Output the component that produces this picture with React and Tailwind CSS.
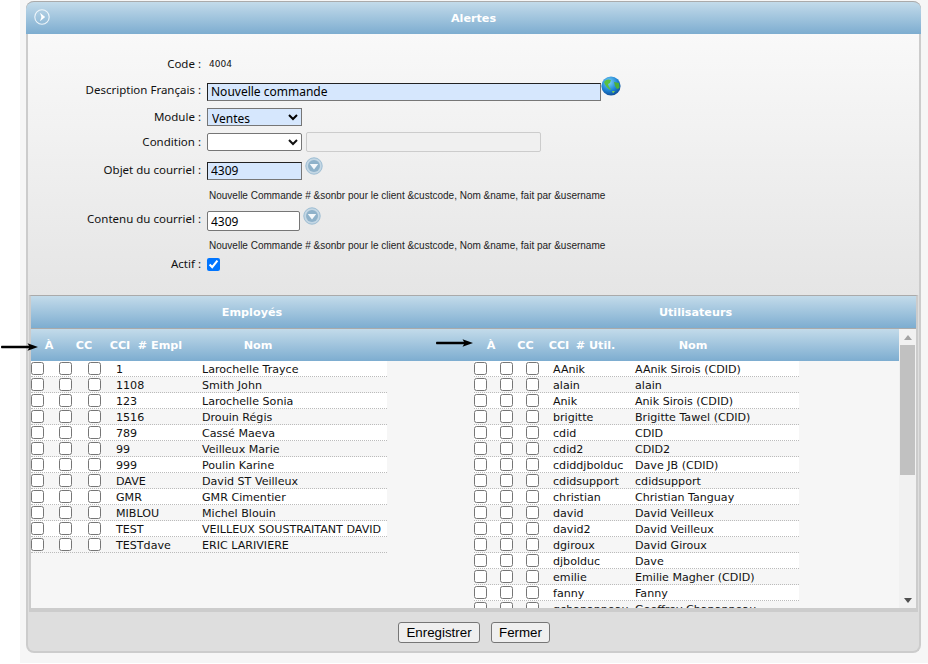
const employes = [
  ["1", "Larochelle Trayce"],
  ["1108", "Smith John"],
  ["123", "Larochelle Sonia"],
  ["1516", "Drouin Régis"],
  ["789", "Cassé Maeva"],
  ["99", "Veilleux Marie"],
  ["999", "Poulin Karine"],
  ["DAVE", "David ST Veilleux"],
  ["GMR", "GMR Cimentier"],
  ["MIBLOU", "Michel Blouin"],
  ["TEST", "VEILLEUX SOUSTRAITANT DAVID"],
  ["TESTdave", "ERIC LARIVIERE"],
];

const utilisateurs = [
  ["AAnik", "AAnik Sirois (CDID)"],
  ["alain", "alain"],
  ["Anik", "Anik Sirois (CDID)"],
  ["brigitte", "Brigitte Tawel (CDID)"],
  ["cdid", "CDID"],
  ["cdid2", "CDID2"],
  ["cdiddjbolduc", "Dave JB (CDID)"],
  ["cdidsupport", "cdidsupport"],
  ["christian", "Christian Tanguay"],
  ["david", "David Veilleux"],
  ["david2", "David Veilleux"],
  ["dgiroux", "David Giroux"],
  ["djbolduc", "Dave"],
  ["emilie", "Emilie Magher (CDID)"],
  ["fanny", "Fanny"],
  ["gchapanneau", "Geoffroy Chapanneau"],
];

const band = "bg-gradient-to-b from-[#c3dbea] to-[#7dadd0]";
const head = "text-center font-['DejaVu_Sans',sans-serif] text-[11.2px] font-bold text-white whitespace-nowrap";
const field = "font-['Noto_Sans',sans-serif] text-[12px] text-black";

const Box = () => <input type="checkbox" className="m-0 h-[13px] w-[13px] shrink-0" />;

const PickIcon = () => (
  <svg width="18" height="18" viewBox="0 0 18 18" className="shrink-0">
    <circle cx="9" cy="9" r="8.2" fill="#c4d7e4" stroke="#9dbdd3" />
    <circle cx="9" cy="9" r="6" fill="#8fb2ca" />
    <path d="M4.8 7 H13.2 L9 12.6 Z" fill="#f4f8fb" />
  </svg>
);

const Globe = () => (
  <svg width="20" height="20" viewBox="0 0 20 20" className="mt-[-12px] shrink-0">
    <defs>
      <radialGradient id="sea" cx="40%" cy="30%" r="78%">
        <stop offset="0%" stopColor="#7fd4f6" />
        <stop offset="55%" stopColor="#1f86d6" />
        <stop offset="100%" stopColor="#0c3f8c" />
      </radialGradient>
    </defs>
    <circle cx="10" cy="10" r="9.6" fill="url(#sea)" />
    <path d="M3 6 C5 3 8 3 10 4 L9 7 L7 8 L8 11 L10 13 L9 14 C6 12 4 9 3 6 Z" fill="#5cc040" />
    <path d="M13 6 L18 7 L18.5 12 L16 13 L14 10 Z" fill="#4cb038" />
    <path d="M11 15 L14 15 L12 17.5 Z" fill="#7ccc50" />
  </svg>
);

const Arrow = ({ className }) => (
  <svg width="37" height="8" viewBox="0 0 37 8" className={`absolute ${className}`}>
    <path d="M1 2.7 H28 L26.5 0.3 L37 4 L26.5 7.7 L28 5.3 H1 C0.2 5.3 0 4.6 0 4 C0 3.4 0.2 2.7 1 2.7 Z" fill="#000" />
  </svg>
);

const Row = ({ label, labelClass = "", className = "", children }) => (
  <div className={`flex items-center ${className}`}>
    <span className={`w-[173px] shrink-0 text-right ${labelClass}`}>{label} :</span>
    <div className="ml-[6px] flex items-center">{children}</div>
  </div>
);

const Hint = ({ className = "" }) => (
  <p className={`ml-[181px] font-['Liberation_Sans',sans-serif] text-[10px] leading-3 text-[#222] ${className}`}>
    Nouvelle Commande # &sonbr pour le client &custcode, Nom &name, fait par &username
  </p>
);

const Table = ({ rows, width, colA, colB }) => (
  <div className={width}>
    {rows.map(([id, nom], i) => (
      <div
        key={id}
        className={`flex h-4 items-center border-b border-dotted border-[#bbb] font-['DejaVu_Sans',sans-serif] text-[11.1px] text-[#111] ${
          i % 2 === 0 ? "bg-white" : "bg-[#f6f6f6]"
        }`}
      >
        <div className={`flex shrink-0 ${colA}`}>
          <Box />
          <Box />
          <Box />
        </div>
        <span className={`mt-[4px] shrink-0 whitespace-nowrap ${colB}`}>{id}</span>
        <span className="mt-[4px] whitespace-nowrap">{nom}</span>
      </div>
    ))}
  </div>
);

export default function App() {
  return (
    <div className="relative ml-5 h-[663px] bg-[#f6f6f6] pt-px pl-[6px] pr-[7px] font-['Noto_Sans',sans-serif] text-[11.5px] text-[#111]">
      <div className="flex h-[652px] flex-col rounded-lg border-x-2 border-b-2 border-[#ccc] bg-[#dedede]">
        {/* titre */}
        <div className={`relative -mx-0.5 flex h-[33px] shrink-0 items-center justify-center rounded-t-lg border-t border-[#aaa] pt-[2px] ${band} ${head}`}>
          <svg width="16" height="16" viewBox="0 0 16 16" className="absolute left-[8px] top-[7px]">
            <circle cx="8" cy="8" r="7.2" fill="none" stroke="#eef5fa" strokeWidth="1.1" />
            <path d="M6 3.8 L11.2 8 L6 12.2 L7.4 8 Z" fill="#fff" />
          </svg>
          Alertes
        </div>

        {/* formulaire */}
        <div className="h-[261px] shrink-0 bg-gradient-to-b from-[#f9f9f9] to-[#e5e5e5] pt-[22px]">
          <Row label="Code" labelClass="mt-[-2px]" className="h-[18px]">
            <span className="ml-[2px] font-['DejaVu_Sans',sans-serif] text-[9px]">4004</span>
          </Row>
          <Row label="Description Français" labelClass="mt-[-4px]" className="mt-[9px] h-[18px]">
            <input
              defaultValue="Nouvelle commande"
              className={`h-[18px] w-[394px] border border-t-[#222] border-l-[#222] border-r-[#777] border-b-[#777] bg-[#d6e7fd] px-[3px] ${field}`}
            />
            <Globe />
          </Row>
          <Row label="Module" className="mt-[6px] h-[19px]">
            <select className={`h-[18px] w-[95px] border border-[#767676] bg-[#d6e7fd] ${field}`}>
              <option>Ventes</option>
            </select>
          </Row>
          <Row label="Condition" className="mt-[6px] h-[19px]">
            <select className="h-[18px] w-[95px] rounded-[2px] border border-[#767676] bg-white" />
            <input
              disabled
              className="ml-[4px] h-[20px] w-[235px] rounded-[2px] border border-[#ccc] bg-[#f0f0f0]"
            />
          </Row>
          <Row label="Objet du courriel" labelClass="mt-[-2px]" className="mt-[11px] h-[18px]">
            <input
              defaultValue="4309"
              className={`h-[18px] w-[95px] border border-t-[#222] border-l-[#222] border-r-[#777] border-b-[#777] bg-[#d6e7fd] px-[3px] ${field}`}
            />
            <span className="ml-[3px] mt-[-10px]">
              <PickIcon />
            </span>
          </Row>
          <Hint className="mt-[10px]" />
          <Row label="Contenu du courriel" labelClass="mt-[-4px]" className="mt-[9px] h-[20px]">
            <input
              defaultValue="4309"
              className={`h-[20px] w-[93px] rounded-[2px] border border-[#767676] bg-white px-[3px] ${field}`}
            />
            <span className="ml-[3px] mt-[-10px]">
              <PickIcon />
            </span>
          </Row>
          <Hint className="mt-[9px]" />
          <Row label="Actif" className="mt-[5px] h-[14px]">
            <input type="checkbox" defaultChecked className="m-0 h-[13px] w-[13px]" />
          </Row>
        </div>

        {/* listes */}
        <div className="mx-px flex h-[317px] shrink-0 flex-col border-x-2 border-b-4 border-[#ccc] border-t-[#aaa] bg-[#f6f6f6] [border-top-width:1px]">
          <div className={`grid h-[32px] shrink-0 grid-cols-[442px_1fr] items-center pt-[2px] ${band} ${head}`}>
            <span>Employés</span>
            <span className="pl-[2px]">Utilisateurs</span>
          </div>
          <div className="flex min-h-0 flex-1 border-t border-[#aaa]">
            <div className="flex min-w-0 flex-1 flex-col">
              <div className={`flex h-[32px] shrink-0 items-center pt-[2px] ${band} ${head}`}>
                <span className="w-[36px]">À</span>
                <span className="w-[34px]">CC</span>
                <span className="w-[38px]">CCI</span>
                <span className="-ml-[2px] w-[46px]"># Empl</span>
                <span className="w-[150px]">Nom</span>
                <span className="w-[140px]" />
                <span className="w-[36px]">À</span>
                <span className="w-[33px]">CC</span>
                <span className="w-[34px]">CCI</span>
                <span className="-ml-[1px] w-[41px]"># Util.</span>
                <span className="w-[154px]">Nom</span>
              </div>
              <div className="grid min-h-0 flex-1 grid-cols-[442px_1fr] overflow-hidden">
                <Table
                  rows={employes}
                  width="w-[356px]"
                  colA="w-[85px] gap-[15px] [&>*:nth-child(2)]:mr-px"
                  colB="w-[86px]"
                />
                <Table
                  rows={utilisateurs}
                  width="ml-px w-[325px]"
                  colA="w-[79px] gap-[13px]"
                  colB="w-[82px]"
                />
              </div>
            </div>
            {/* barre de défilement */}
            <div className="flex w-[17px] shrink-0 flex-col items-center bg-[#f1f1f1]">
              <svg width="8" height="5" viewBox="0 0 8 5" className="mt-[6px]">
                <path d="M4 0 L8 5 H0 Z" fill="#a3a3a3" />
              </svg>
              <div className="mt-[5px] h-[130px] w-[15px] bg-[#c1c1c1]" />
              <div className="flex-1" />
              <svg width="8" height="5" viewBox="0 0 8 5" className="mb-[5px]">
                <path d="M0 0 H8 L4 5 Z" fill="#505050" />
              </svg>
            </div>
          </div>
        </div>

        {/* boutons */}
        <div className="flex flex-1 items-start justify-center gap-[11px] pt-[10px] pl-[1px] font-['Liberation_Sans',sans-serif] text-[13.33px] text-black">
          <button className="h-[21px] w-[82px] rounded-[3px] border border-[#767676] bg-[#efefef]">Enregistrer</button>
          <button className="h-[21px] w-[59px] rounded-[3px] border border-[#767676] bg-[#efefef]">Fermer</button>
        </div>
      </div>

      <Arrow className="left-[-19px] top-[343px]" />
      <Arrow className="left-[416px] top-[339px]" />
    </div>
  );
}
